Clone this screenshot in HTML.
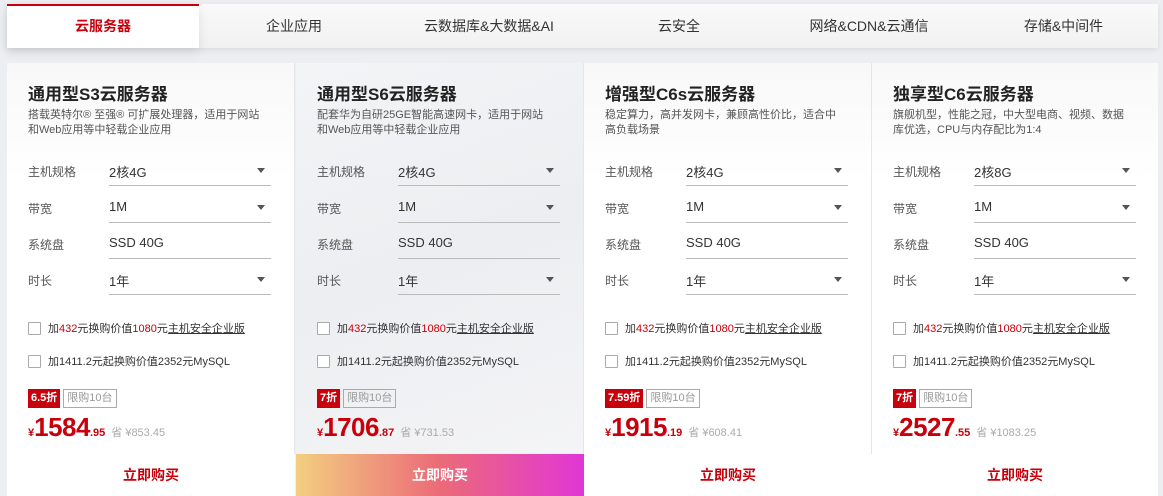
<!DOCTYPE html>
<html><head><meta charset="utf-8">
<style>
*{margin:0;padding:0;box-sizing:border-box}
body{width:1163px;height:496px;overflow:hidden;background:#eceef1;font-family:"Liberation Sans","Noto Sans CJK SC",sans-serif;color:#333;position:relative}
.tabs{position:absolute;left:7px;top:4px;width:1151px;height:44px;background:linear-gradient(#fafafa,#f1f1f2);box-shadow:0 2px 6px rgba(0,0,0,.08)}
.tab{position:absolute;top:0;height:44px;line-height:44px;text-align:center;font-size:14px;color:#333}
.tab.on{background:#fff;border-top:2px solid #c7000b;color:#c7000b;font-weight:bold;line-height:40px;box-shadow:0 4px 10px rgba(0,0,0,.1)}
.card{position:absolute;top:63px;width:288px;height:391px;background:linear-gradient(#f8f8f9,#fff 30%);border-right:1px solid #e6e6e6}
.card.g{background:linear-gradient(160deg,#f3f4f6,#eceef1 50%,#f4f4f6)}
.t{position:absolute;left:21px;top:17px;font-size:17px;font-weight:bold;color:#222}
.d{position:absolute;left:21px;top:45px;font-size:11px;line-height:15px;color:#555;width:240px}
.row{position:absolute;left:21px;width:243px;height:30px}
.row .l{position:absolute;left:0;top:7px;font-size:12px;color:#555}
.row .v{position:absolute;left:81px;right:0;top:0;height:30px;border-bottom:1px solid #bbb;font-size:13px;padding-top:6px;color:#333}
.row .v i{position:absolute;right:6px;top:12px;width:0;height:0;border-left:4px solid transparent;border-right:4px solid transparent;border-top:5px solid #555}
.ck{position:absolute;left:21px;font-size:11px;color:#333}
.ck b{display:inline-block;width:13px;height:13px;border:1px solid #aaa;background:#fff;vertical-align:-3px;margin-right:7px;border-radius:1px}
.ck em{font-style:normal;color:#c7000b}
.ck u{text-decoration:underline}
.bd{position:absolute;left:21px;top:326px;height:19px;font-size:11px}
.bd span{display:inline-block;height:19px;line-height:17px;padding:0 3px;vertical-align:top}
.bd .r{background:#c7000b;color:#fff;font-weight:bold;line-height:19px}
.bd .o{border:1px solid #aaa;color:#999;margin-left:3px}
.pr{position:absolute;left:21px;top:349px;color:#c7000b;font-weight:bold;white-space:nowrap}
.pr .y{font-size:11px}
.pr .n{font-size:26px;letter-spacing:-.5px}
.pr .c{font-size:11px}
.pr .s{font-size:11px;color:#aaa;font-weight:normal;margin-left:6px}
.buy{position:absolute;top:454px;width:288px;height:42px;background:#fff;line-height:42px;text-align:center;font-size:14px;font-weight:bold;color:#c7000b}
.buy.h{background:linear-gradient(90deg,#f2cf80,#ec6a78 50%,#e136d6);color:#fff}
</style></head><body>
<div class="tabs">
<div class="tab on" style="left:0;width:192px">云服务器</div>
<div class="tab" style="left:192px;width:190px">企业应用</div>
<div class="tab" style="left:382px;width:200px">云数据库&amp;大数据&amp;AI</div>
<div class="tab" style="left:582px;width:180px">云安全</div>
<div class="tab" style="left:762px;width:200px">网络&amp;CDN&amp;云通信</div>
<div class="tab" style="left:962px;width:189px">存储&amp;中间件</div>
</div>

<div class="card" style="left:7px">
<div class="t">通用型S3云服务器</div>
<div class="d">搭载英特尔® 至强® 可扩展处理器，适用于网站<br>和Web应用等中轻载企业应用</div>
<div class="row" style="top:93px"><span class="l">主机规格</span><div class="v">2核4G<i></i></div></div>
<div class="row" style="top:130px"><span class="l">带宽</span><div class="v">1M<i></i></div></div>
<div class="row" style="top:166px"><span class="l">系统盘</span><div class="v">SSD 40G</div></div>
<div class="row" style="top:202px"><span class="l">时长</span><div class="v">1年<i></i></div></div>
<div class="ck" style="top:257px"><b></b>加<em>432</em>元换购价值<em>1080</em>元<u>主机安全企业版</u></div>
<div class="ck" style="top:290px"><b></b>加1411.2元起换购价值2352元MySQL</div>
<div class="bd"><span class="r">6.5折</span><span class="o">限购10台</span></div>
<div class="pr"><span class="y">¥</span><span class="n">1584</span><span class="c">.95</span><span class="s">省 ¥853.45</span></div>
</div>

<div class="card g" style="left:296px">
<div class="t">通用型S6云服务器</div>
<div class="d">配套华为自研25GE智能高速网卡，适用于网站<br>和Web应用等中轻载企业应用</div>
<div class="row" style="top:93px"><span class="l">主机规格</span><div class="v">2核4G<i></i></div></div>
<div class="row" style="top:130px"><span class="l">带宽</span><div class="v">1M<i></i></div></div>
<div class="row" style="top:166px"><span class="l">系统盘</span><div class="v">SSD 40G</div></div>
<div class="row" style="top:202px"><span class="l">时长</span><div class="v">1年<i></i></div></div>
<div class="ck" style="top:257px"><b></b>加<em>432</em>元换购价值<em>1080</em>元<u>主机安全企业版</u></div>
<div class="ck" style="top:290px"><b></b>加1411.2元起换购价值2352元MySQL</div>
<div class="bd"><span class="r">7折</span><span class="o">限购10台</span></div>
<div class="pr"><span class="y">¥</span><span class="n">1706</span><span class="c">.87</span><span class="s">省 ¥731.53</span></div>
</div>

<div class="card" style="left:584px">
<div class="t">增强型C6s云服务器</div>
<div class="d">稳定算力，高并发网卡，兼顾高性价比，适合中<br>高负载场景</div>
<div class="row" style="top:93px"><span class="l">主机规格</span><div class="v">2核4G<i></i></div></div>
<div class="row" style="top:130px"><span class="l">带宽</span><div class="v">1M<i></i></div></div>
<div class="row" style="top:166px"><span class="l">系统盘</span><div class="v">SSD 40G</div></div>
<div class="row" style="top:202px"><span class="l">时长</span><div class="v">1年<i></i></div></div>
<div class="ck" style="top:257px"><b></b>加<em>432</em>元换购价值<em>1080</em>元<u>主机安全企业版</u></div>
<div class="ck" style="top:290px"><b></b>加1411.2元起换购价值2352元MySQL</div>
<div class="bd"><span class="r">7.59折</span><span class="o">限购10台</span></div>
<div class="pr"><span class="y">¥</span><span class="n">1915</span><span class="c">.19</span><span class="s">省 ¥608.41</span></div>
</div>

<div class="card" style="left:872px;width:286px;border-right:none">
<div class="t">独享型C6云服务器</div>
<div class="d">旗舰机型，性能之冠，中大型电商、视频、数据<br>库优选，CPU与内存配比为1:4</div>
<div class="row" style="top:93px"><span class="l">主机规格</span><div class="v">2核8G<i></i></div></div>
<div class="row" style="top:130px"><span class="l">带宽</span><div class="v">1M<i></i></div></div>
<div class="row" style="top:166px"><span class="l">系统盘</span><div class="v">SSD 40G</div></div>
<div class="row" style="top:202px"><span class="l">时长</span><div class="v">1年<i></i></div></div>
<div class="ck" style="top:257px"><b></b>加<em>432</em>元换购价值<em>1080</em>元<u>主机安全企业版</u></div>
<div class="ck" style="top:290px"><b></b>加1411.2元起换购价值2352元MySQL</div>
<div class="bd"><span class="r">7折</span><span class="o">限购10台</span></div>
<div class="pr"><span class="y">¥</span><span class="n">2527</span><span class="c">.55</span><span class="s">省 ¥1083.25</span></div>
</div>

<div class="buy" style="left:7px">立即购买</div>
<div class="buy h" style="left:296px">立即购买</div>
<div class="buy" style="left:584px">立即购买</div>
<div class="buy" style="left:872px;width:286px">立即购买</div>
</body></html>
